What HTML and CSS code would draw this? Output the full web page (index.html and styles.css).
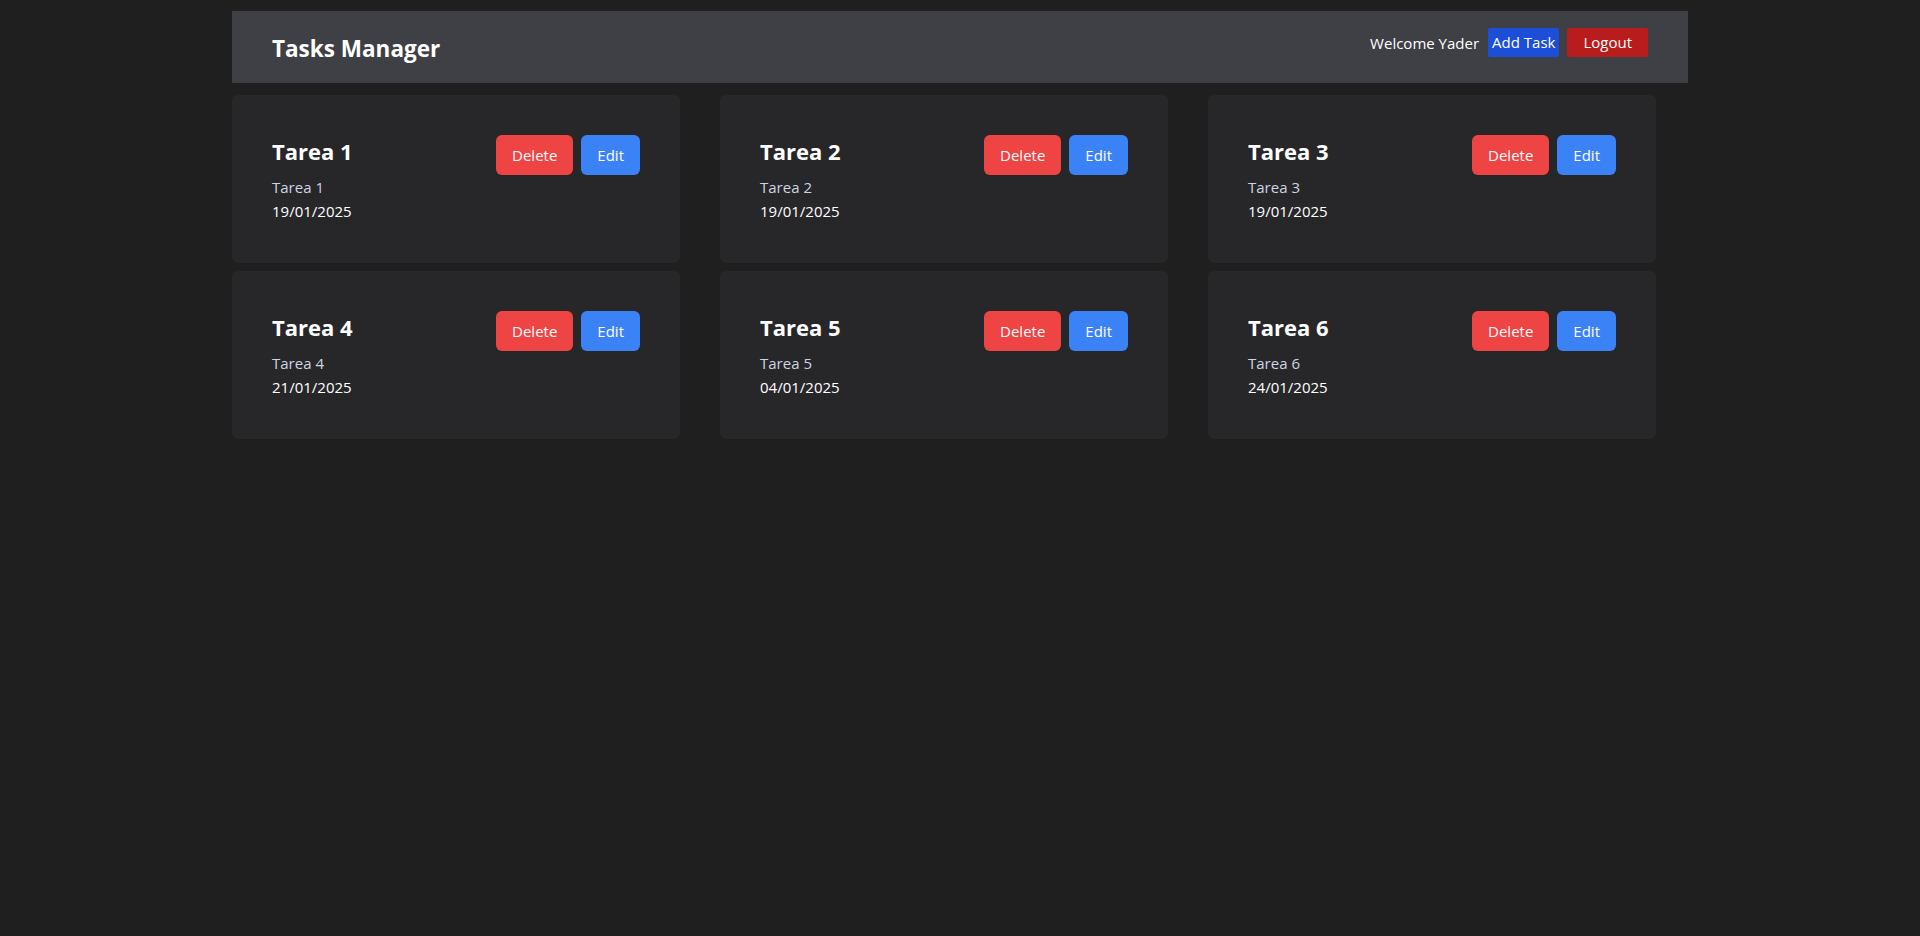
FILE: index.html
```html
<!DOCTYPE html>
<html lang="en">
<head>
<meta charset="utf-8">
<title>Tasks Manager</title>
<link rel="stylesheet" href="styles.css">
</head>
<body>
<div class="page">
  <header class="navbar">
    <h1 class="brand">Tasks Manager</h1>
    <div class="nav-right">
      <span class="welcome">Welcome Yader</span>
      <button class="btn-add">Add Task</button>
      <button class="btn-logout">Logout</button>
    </div>
  </header>
  <main class="grid">
    <div class="card">
      <div class="card-head"><h2 class="card-title">Tarea 1</h2><div class="actions"><button class="btn btn-delete">Delete</button><button class="btn btn-edit">Edit</button></div></div>
      <p class="desc">Tarea 1</p><p class="date">19/01/2025</p>
    </div>
    <div class="card">
      <div class="card-head"><h2 class="card-title">Tarea 2</h2><div class="actions"><button class="btn btn-delete">Delete</button><button class="btn btn-edit">Edit</button></div></div>
      <p class="desc">Tarea 2</p><p class="date">19/01/2025</p>
    </div>
    <div class="card">
      <div class="card-head"><h2 class="card-title">Tarea 3</h2><div class="actions"><button class="btn btn-delete">Delete</button><button class="btn btn-edit">Edit</button></div></div>
      <p class="desc">Tarea 3</p><p class="date">19/01/2025</p>
    </div>
    <div class="card">
      <div class="card-head"><h2 class="card-title">Tarea 4</h2><div class="actions"><button class="btn btn-delete">Delete</button><button class="btn btn-edit">Edit</button></div></div>
      <p class="desc">Tarea 4</p><p class="date">21/01/2025</p>
    </div>
    <div class="card">
      <div class="card-head"><h2 class="card-title">Tarea 5</h2><div class="actions"><button class="btn btn-delete">Delete</button><button class="btn btn-edit">Edit</button></div></div>
      <p class="desc">Tarea 5</p><p class="date">04/01/2025</p>
    </div>
    <div class="card">
      <div class="card-head"><h2 class="card-title">Tarea 6</h2><div class="actions"><button class="btn btn-delete">Delete</button><button class="btn btn-edit">Edit</button></div></div>
      <p class="desc">Tarea 6</p><p class="date">24/01/2025</p>
    </div>
  </main>
</div>
</body>
</html>
```
FILE: styles.css
```css
* { box-sizing: border-box; }
html, body { margin: 0; padding: 0; }
body {
  background: #1f1f1f;
  color: #ffffff;
  font-family: "Open Sans", "Noto Sans", sans-serif;
  font-size: 16px;
  line-height: 24px;
  min-height: 936px;
}
.page {
  width: 1456px;
  margin: 0 auto;
  padding-top: 11px;
}
.navbar {
  height: 72px;
  background: #3f3f46;
  display: flex;
  align-items: center;
  justify-content: space-between;
  padding: 0 40px;
}
.brand {
  margin: 0;
  font-size: 22.5px;
  line-height: 32px;
  font-weight: 700;
  padding-top: 4px;
}
.nav-right {
  display: flex;
  align-items: center;
  gap: 8px;
  margin-bottom: 9px;
}
.welcome { font-size: 15px; margin-right: 1px; }
.btn-add, .btn-logout {
  font-family: inherit;
  font-size: 15px;
  color: #fff;
  border: 0;
  height: 29px;
  border-radius: 2px;
  line-height: 29px;
  cursor: pointer;
}
.btn-add { background: #1d4ed8; padding: 0 4px; }
.btn-logout { background: #b91c1c; padding: 0 16px; }
.grid {
  margin-top: 12px;
  display: grid;
  grid-template-columns: repeat(3, 448px);
  column-gap: 40px;
  row-gap: 8px;
}
.card {
  background: #27272a;
  border-radius: 6px;
  padding: 40px;
  height: 168px;
}
.card-head {
  display: flex;
  justify-content: space-between;
  align-items: flex-start;
  height: 40px;
}
.card-title {
  margin: 0;
  font-size: 22px;
  line-height: 32px;
  font-weight: 700;
}
.actions { display: flex; gap: 8px; }
.btn {
  font-family: inherit;
  font-size: 15px;
  color: #fff;
  border: 0;
  height: 40px;
  padding: 0 16px;
  border-radius: 6px;
  cursor: pointer;
}
.btn-delete { background: #ef4444; }
.btn-edit { background: #3b82f6; }
.desc { margin: 0; color: #cbd5e1; font-size: 15px; }
.date { margin: 0; color: #ffffff; font-size: 15px; }
```
